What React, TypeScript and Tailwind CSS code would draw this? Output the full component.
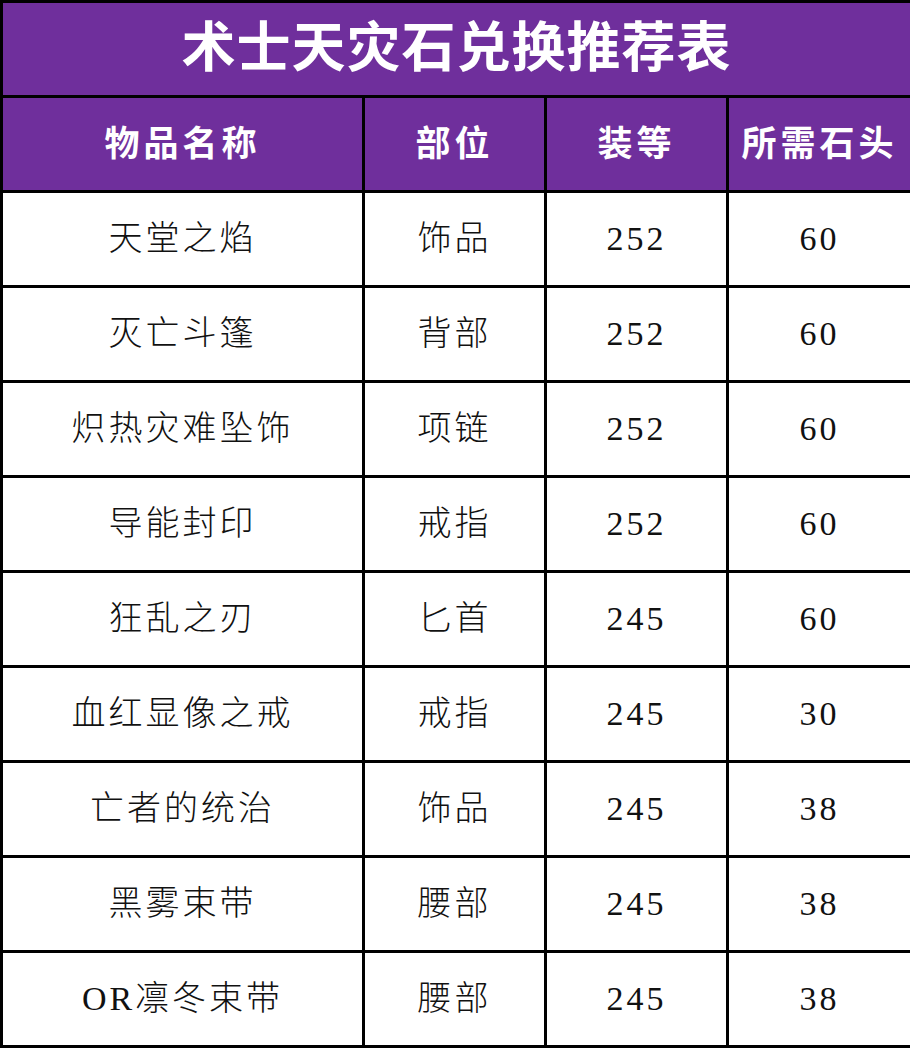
const rows: [string, string, string, string][] = [
  ['天堂之焰', '饰品', '252', '60'],
  ['灭亡斗篷', '背部', '252', '60'],
  ['炽热灾难坠饰', '项链', '252', '60'],
  ['导能封印', '戒指', '252', '60'],
  ['狂乱之刃', '匕首', '245', '60'],
  ['血红显像之戒', '戒指', '245', '30'],
  ['亡者的统治', '饰品', '245', '38'],
  ['黑雾束带', '腰部', '245', '38'],
  ['OR凛冬束带', '腰部', '245', '38'],
];

const headers = ['物品名称', '部位', '装等', '所需石头'];

export default function App() {
  return (
    <div className="w-[910px] h-[1048px] bg-white" style={{ fontFamily: '"Liberation Serif", "Noto Sans CJK SC", serif' }}>
      <table className="w-[910px] border-collapse table-fixed">
        <colgroup>
          <col className="w-[362px]" />
          <col className="w-[182px]" />
          <col className="w-[182px]" />
          <col className="w-[184px]" />
        </colgroup>
        <thead>
          <tr>
            <th
              colSpan={4}
              className="h-[95px] border-[3px] border-black bg-[#6f2f9c] text-white text-[54px] font-bold tracking-[1px] leading-none"
            >
              术士天灾石兑换推荐表
            </th>
          </tr>
          <tr>
            {headers.map((h) => (
              <th
                key={h}
                className="h-[95px] border-[3px] border-black bg-[#6f2f9c] text-white text-[35px] font-bold tracking-[4px] leading-none"
              >
                {h}
              </th>
            ))}
          </tr>
        </thead>
        <tbody>
          {rows.map((r, i) => (
            <tr key={i}>
              {r.map((c, j) => (
                <td
                  key={j}
                  className="h-[95px] border-[3px] border-black text-center text-[#111] text-[34px] font-light tracking-[3px] leading-none"
                >
                  {c}
                </td>
              ))}
            </tr>
          ))}
        </tbody>
      </table>
    </div>
  );
}
